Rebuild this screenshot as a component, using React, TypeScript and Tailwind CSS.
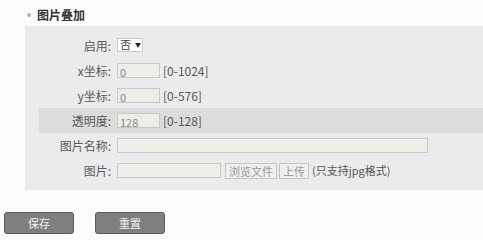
const font = "font-['Microsoft_YaHei','Noto_Sans_CJK_SC',sans-serif]";

function Row({ label, hi, children }: { label: string; hi?: boolean; children: React.ReactNode }) {
  return (
    <div className={`ml-[14px] h-[25px] flex items-center ${hi ? "bg-[#dcdcdc]" : ""}`}>
      <div className="w-[73px] text-right text-[12px] text-[#5a5a5a] pr-[1px]">{label}:</div>
      <div className="ml-[5px] flex items-center gap-[3px]">{children}</div>
    </div>
  );
}

function Field({ w, value }: { w: string; value?: string }) {
  return (
    <div className={`${w} h-[15px] border border-[#c9c9c4] bg-[#eeede8] text-[11px] leading-[13px] text-[#888] pl-[2px] pt-[2px]`}>
      {value}
    </div>
  );
}

function SmallBtn({ children }: { children: React.ReactNode }) {
  return (
    <div className="h-[16px] px-[3px] border border-[#c4c4c4] bg-[#efefef] text-[11px] leading-[14px] text-[#999]">{children}</div>
  );
}

export default function App() {
  return (
    <div className={`w-[483px] h-[240px] bg-[#fbfbfb] overflow-hidden ${font}`}>
      <div className="h-[26px] flex items-center pl-[27px] pt-[4px]">
        <span className="w-[4px] h-[4px] rounded-full bg-[#a9b3bd]" />
        <span className="ml-[6px] text-[12px] font-bold text-[#333]">图片叠加</span>
      </div>

      <div className="ml-[25px] bg-[#ebebed] pt-[7px] pb-[7px]">
        <Row label="启用">
          <div className="w-[26px] h-[14px] border border-[#c8c8c8] bg-white flex items-center pl-[2px] text-[11px] text-[#444] mt-[-2px]">
            否<span className="ml-[4px] text-[6px] text-[#222]">▼</span>
          </div>
        </Row>
        <Row label="x坐标">
          <Field w="w-[43px]" value="0" />
          <span className="text-[12px] text-[#555]">[0-1024]</span>
        </Row>
        <Row label="y坐标">
          <Field w="w-[43px]" value="0" />
          <span className="text-[12px] text-[#555]">[0-576]</span>
        </Row>
        <Row label="透明度" hi>
          <Field w="w-[43px]" value="128" />
          <span className="text-[12px] text-[#555]">[0-128]</span>
        </Row>
        <Row label="图片名称">
          <Field w="w-[311px]" />
        </Row>
        <Row label="图片">
          <Field w="w-[104px]" />
          <div className="flex items-center gap-[2px] ml-[1px]">
            <SmallBtn>浏览文件</SmallBtn>
            <SmallBtn>上传</SmallBtn>
          </div>
          <span className="text-[11px] text-[#555]">(只支持jpg格式)</span>
        </Row>
      </div>

      <div className="flex gap-[21px] pl-[4px] pt-[22px]">
        <button className="w-[70px] h-[22px] rounded-[3px] border border-[#5a5a5a] bg-[#7f7f7f] text-[11px] text-[#f4f4f4]">保存</button>
        <button className="w-[70px] h-[22px] rounded-[3px] border border-[#5a5a5a] bg-[#7f7f7f] text-[11px] text-[#f4f4f4]">重置</button>
      </div>
    </div>
  );
}
